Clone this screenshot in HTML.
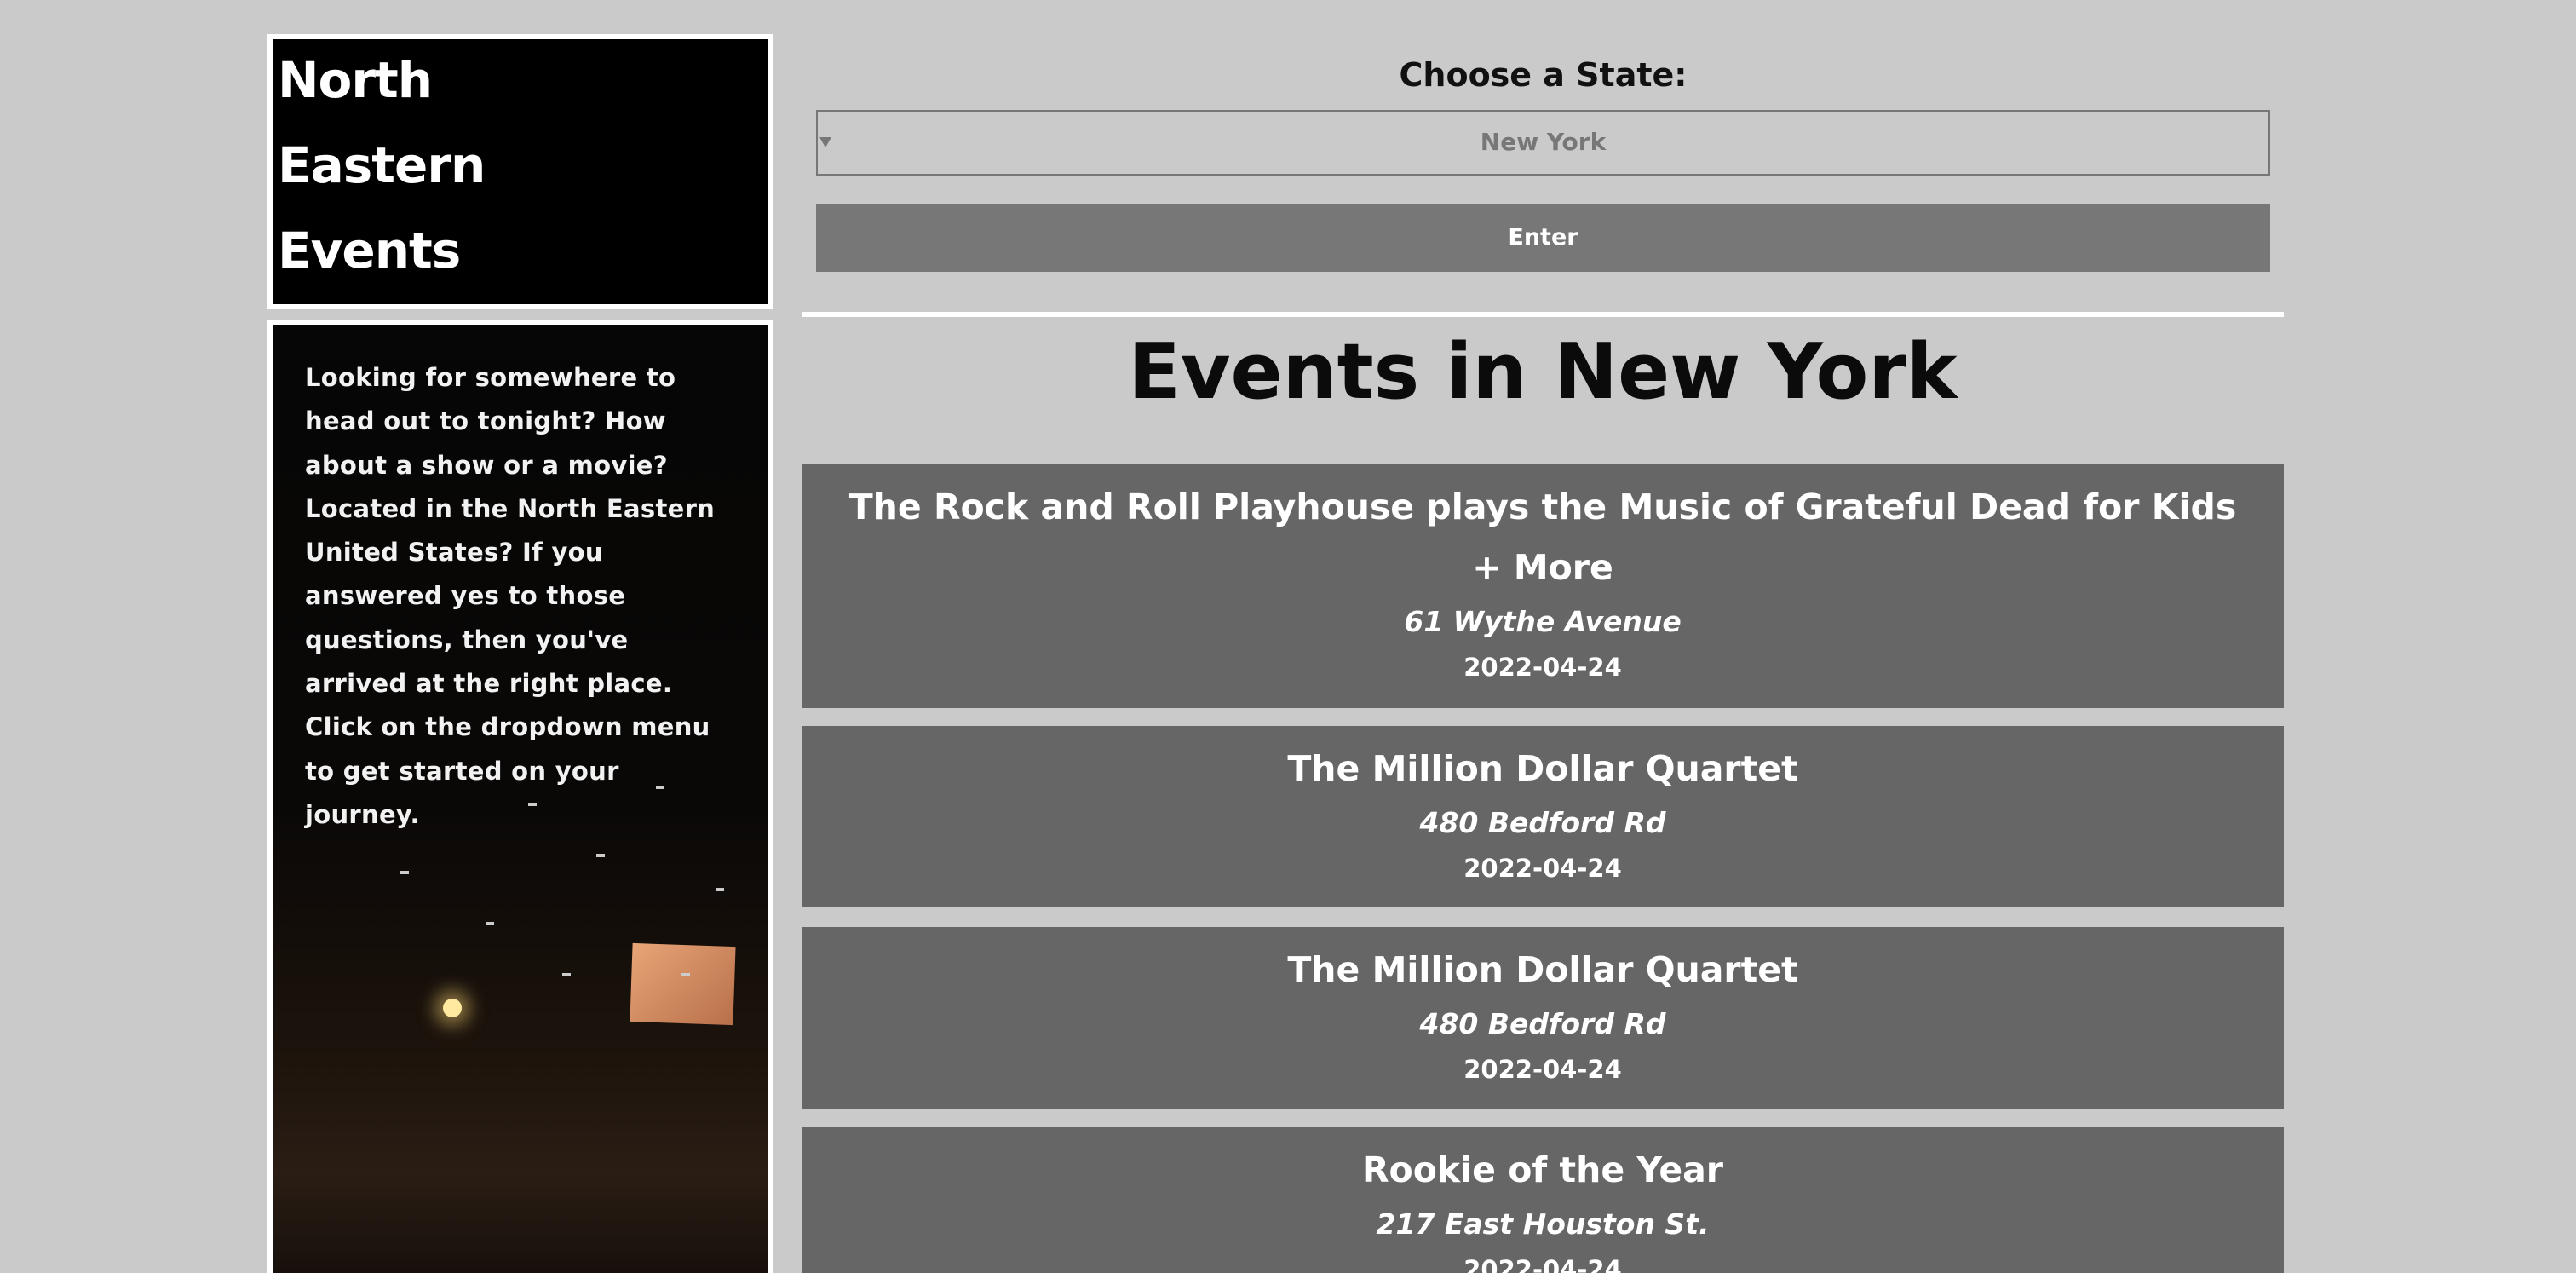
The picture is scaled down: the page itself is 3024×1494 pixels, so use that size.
<!DOCTYPE html>
<html><head><meta charset="utf-8"><style>
html,body{margin:0;padding:0;width:3024px;height:1494px;overflow:hidden;background:#cacaca;font-family:"DejaVu Sans","Liberation Sans",sans-serif;font-weight:bold}
#w{position:relative;width:3024px;height:1494px;overflow:hidden}
.hdr{position:absolute;left:314px;top:40px;width:582px;height:311px;background:#000;border:6px solid #fff}
.hdr div{position:absolute;left:6px;color:#fff;font-size:58px;letter-spacing:-1px}
.side{position:absolute;left:314px;top:376px;width:582px;height:1130px;border:6px solid #fff;overflow:hidden;
background:linear-gradient(180deg,#060606 0%,#0a0807 50%,#1c130c 75%,#2a1d14 88%,#140e0a 100%)}
.side p{position:absolute;left:38px;top:36px;width:490px;margin:0;color:#f2f2f2;font-size:29px;line-height:51.3px;letter-spacing:.3px}
.screen{position:absolute;left:421px;top:727px;width:121px;height:92px;background:linear-gradient(135deg,#e8a477,#b8704a);transform:rotate(2deg)}
.light{position:absolute;left:200px;top:790px;width:22px;height:22px;border-radius:50%;background:#ffe9a0;box-shadow:0 0 20px 10px rgba(255,220,120,.5)}
.conf{position:absolute;background:#ccc;width:10px;height:4px}
.lbl{position:absolute;left:958px;width:1707px;top:66px;text-align:center;font-size:38px;color:#111}
.sel{position:absolute;left:958px;top:129px;width:1703px;height:73px;border:2px solid #777;box-sizing:content-box}
.sel span{position:absolute;width:100%;text-align:center;top:19px;font-size:28px;color:#777}
.sel i{position:absolute;left:2px;top:30px;border-left:7px solid transparent;border-right:7px solid transparent;border-top:12px solid #777}
.btn{position:absolute;left:958px;top:239px;width:1707px;height:80px;background:#777;color:#fff;text-align:center;line-height:80px;font-size:27px}
.line{position:absolute;left:941px;top:366px;width:1740px;height:6px;background:#fff}
h1{position:absolute;left:941px;width:1740px;top:384px;margin:0;text-align:center;font-size:90px;color:#0b0b0b;letter-spacing:0px}
.card{position:absolute;left:941px;width:1740px;background:#666;color:#fff;text-align:center}
.t{font-size:41px;line-height:71px}
.a{font-size:33px;font-style:italic;line-height:56px}
.d{font-size:29px;line-height:50px}
</style></head><body><div id="w">
<div class="hdr"><div style="top:14px">North</div><div style="top:114px">Eastern</div><div style="top:214px">Events</div></div>
<div class="side">
<div class="screen"></div><div class="light"></div>
<div class="conf" style="left:300px;top:560px"></div><div class="conf" style="left:380px;top:620px"></div><div class="conf" style="left:450px;top:540px"></div><div class="conf" style="left:250px;top:700px"></div><div class="conf" style="left:520px;top:660px"></div><div class="conf" style="left:150px;top:640px"></div><div class="conf" style="left:480px;top:760px"></div><div class="conf" style="left:340px;top:760px"></div>
<p>Looking for somewhere to head out to tonight? How about a show or a movie? Located in the North Eastern United States? If you answered yes to those questions, then you've arrived at the right place. Click on the dropdown menu to get started on your journey.</p>
</div>
<div class="lbl">Choose a State:</div>
<div class="sel"><i></i><span>New York</span></div>
<div class="btn">Enter</div>
<div class="line"></div>
<h1>Events in New York</h1>
<div class="card" style="top:544px;height:287px;padding-top:16px;box-sizing:border-box"><div class="t">The Rock and Roll Playhouse plays the Music of Grateful Dead for Kids<br>+ More</div><div class="a">61 Wythe Avenue</div><div class="d">2022-04-24</div></div>
<div class="card" style="top:852px;height:213px;padding-top:15px;box-sizing:border-box"><div class="t">The Million Dollar Quartet</div><div class="a">480 Bedford Rd</div><div class="d">2022-04-24</div></div>
<div class="card" style="top:1088px;height:214px;padding-top:15px;box-sizing:border-box"><div class="t">The Million Dollar Quartet</div><div class="a">480 Bedford Rd</div><div class="d">2022-04-24</div></div>
<div class="card" style="top:1323px;height:250px;padding-top:15px;box-sizing:border-box"><div class="t">Rookie of the Year</div><div class="a">217 East Houston St.</div><div class="d">2022-04-24</div></div>
</div></body></html>
